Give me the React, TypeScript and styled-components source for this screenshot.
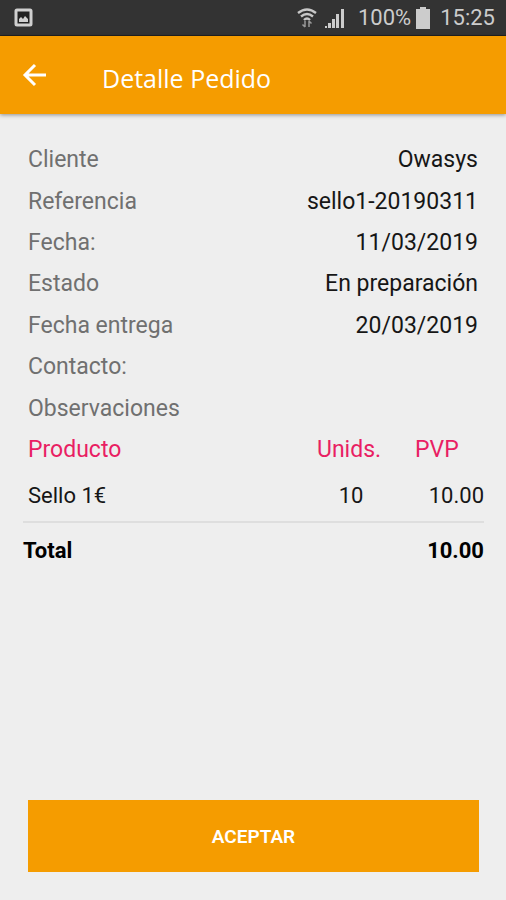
import React from 'react';
import styled, { createGlobalStyle } from 'styled-components';

const GlobalStyle = createGlobalStyle`
  *, *::before, *::after { box-sizing: border-box; }
  body { margin: 0; background: #eeeeee; font-family: Roboto, "Noto Sans", sans-serif; }
`;

const Screen = styled.div`
  display: flex;
  flex-direction: column;
  min-height: 100vh;
  color: #161616;
  font-size: 23px;
`;

const StatusBar = styled.div`
  display: flex;
  align-items: center;
  justify-content: space-between;
  height: 36px;
  padding: 0 11px 0 14px;
  border-bottom: 1px solid #222222;
  background: #333333;
  color: #cccccc;
  font-size: 22px;
`;

const StatusGroup = styled.div`
  display: flex;
  align-items: center;
`;

const Percent = styled.span`
  margin: 0 4px 0 14px;
`;

const Clock = styled.time`
  margin-left: 9px;
`;

const Signal = styled.svg`
  margin-left: 8px;
`;

const AppBar = styled.header`
  display: flex;
  align-items: center;
  gap: 52px;
  height: 78px;
  padding: 0 20px;
  background: #f59c00;
  box-shadow: 0 1px 4px rgba(0, 0, 0, 0.4);
`;

const BackButton = styled.button`
  display: flex;
  padding: 0;
  border: 0;
  background: none;
  color: #ffffff;
`;

const Title = styled.h1`
  margin: 0;
  padding-top: 6px;
  color: #ffffff;
  font-family: "Open Sans", sans-serif;
  font-size: 25px;
  font-weight: 400;
`;

const Content = styled.main`
  display: flex;
  flex: 1;
  flex-direction: column;
  padding: 25px 22px 28px 23px;
`;

const Details = styled.dl`
  display: grid;
  grid-auto-rows: 1fr;
  min-height: 290px;
  margin: 0;
  padding: 0 6px 0 5px;
`;

const DetailRow = styled.div`
  display: flex;
  align-items: center;
  justify-content: space-between;
`;

const Label = styled.dt`
  color: #707070;
`;

const Value = styled.dd`
  margin: 0;
`;

const Products = styled.table`
  width: 100%;
  border-collapse: collapse;
`;

const HeadCell = styled.th<{ $width?: number }>`
  width: ${({ $width }) => ($width ? `${$width}px` : 'auto')};
  height: 41px;
  padding: 0 0 0 5px;
  color: #e91e63;
  font-weight: 400;
  text-align: left;
`;

const Cell = styled.td<{ $align?: string }>`
  height: 52px;
  padding: 0 0 0 5px;
  border-bottom: 2px solid #dedede;
  font-size: 22px;
  text-align: ${({ $align }) => $align ?? 'left'};
`;

const UnitsCell = styled(Cell)`
  padding: 0 20px 0 0;
`;

const TotalCell = styled.td<{ $end?: boolean }>`
  height: 56px;
  padding: 0;
  color: #000000;
  font-size: 22px;
  font-weight: 700;
  text-align: ${({ $end }) => ($end ? 'right' : 'left')};
`;

const AcceptButton = styled.button`
  height: 72px;
  margin: auto 5px 0;
  border: 0;
  background: #f59c00;
  color: #ffffff;
  font-family: inherit;
  font-size: 19px;
  font-weight: 600;
`;

const details = [
  ['Cliente', 'Owasys'],
  ['Referencia', 'sello1-20190311'],
  ['Fecha:', '11/03/2019'],
  ['Estado', 'En preparación'],
  ['Fecha entrega', '20/03/2019'],
  ['Contacto:', ''],
  ['Observaciones', ''],
];

export default function App() {
  return (
    <Screen>
      <GlobalStyle />
      <StatusBar>
        <svg width="19" height="19" viewBox="0 0 19 19" aria-hidden="true">
          <rect x="2" y="2" width="15" height="15" rx="1" fill="#222222" stroke="#d0d0d0" strokeWidth="3" />
          <path d="M5 14v-3l2-2 2 2 2-3 3 3v3z" fill="#d0d0d0" />
        </svg>
        <StatusGroup>
          <svg width="20" height="20" viewBox="0 0 20 20" fill="none" stroke="#c8c8c8" strokeWidth="2.400" aria-hidden="true">
            <path d="M1 5Q10-2 19 5M4 8.500Q10 3.500 16 8.500M7 12Q10 9 13 12" />
            <path d="M8 13v6M5.500 16.500L8 19M12 19v-6M14.500 15.500L12 13" stroke="#999999" strokeWidth="1.500" />
          </svg>
          <Signal width="19" height="20" viewBox="0 0 19 20" fill="#cccccc" aria-hidden="true">
            <path d="M0 18h2v2H0zM3 15h3v5H3zM7 11h3v9H7zM11 6h3v14h-3zM16 1h3v19h-3z" />
          </Signal>
          <Percent>100%</Percent>
          <svg width="16" height="22" viewBox="0 0 16 22" fill="#cccccc" aria-hidden="true">
            <path d="M5 0h6v2h4v20H1V2h4z" />
          </svg>
          <Clock>15:25</Clock>
        </StatusGroup>
      </StatusBar>
      <AppBar>
        <BackButton aria-label="Volver">
          <svg width="30" height="30" viewBox="0 0 30 30" fill="none" stroke="currentColor" strokeWidth="3" aria-hidden="true">
            <path d="M26 15H5M15 5L5 15l10 10" />
          </svg>
        </BackButton>
        <Title>Detalle Pedido</Title>
      </AppBar>
      <Content>
        <Details>
          {details.map(([label, value]) => (
            <DetailRow key={label}>
              <Label>{label}</Label>
              <Value>{value}</Value>
            </DetailRow>
          ))}
        </Details>
        <Products>
          <thead>
            <tr>
              <HeadCell>Producto</HeadCell>
              <HeadCell $width={98}>Unids.</HeadCell>
              <HeadCell $width={74}>PVP</HeadCell>
            </tr>
          </thead>
          <tbody>
            <tr>
              <Cell>Sello 1€</Cell>
              <UnitsCell $align="center">10</UnitsCell>
              <Cell $align="right">10.00</Cell>
            </tr>
          </tbody>
          <tfoot>
            <tr>
              <TotalCell colSpan={2}>Total</TotalCell>
              <TotalCell $end>10.00</TotalCell>
            </tr>
          </tfoot>
        </Products>
        <AcceptButton>ACEPTAR</AcceptButton>
      </Content>
    </Screen>
  );
}
